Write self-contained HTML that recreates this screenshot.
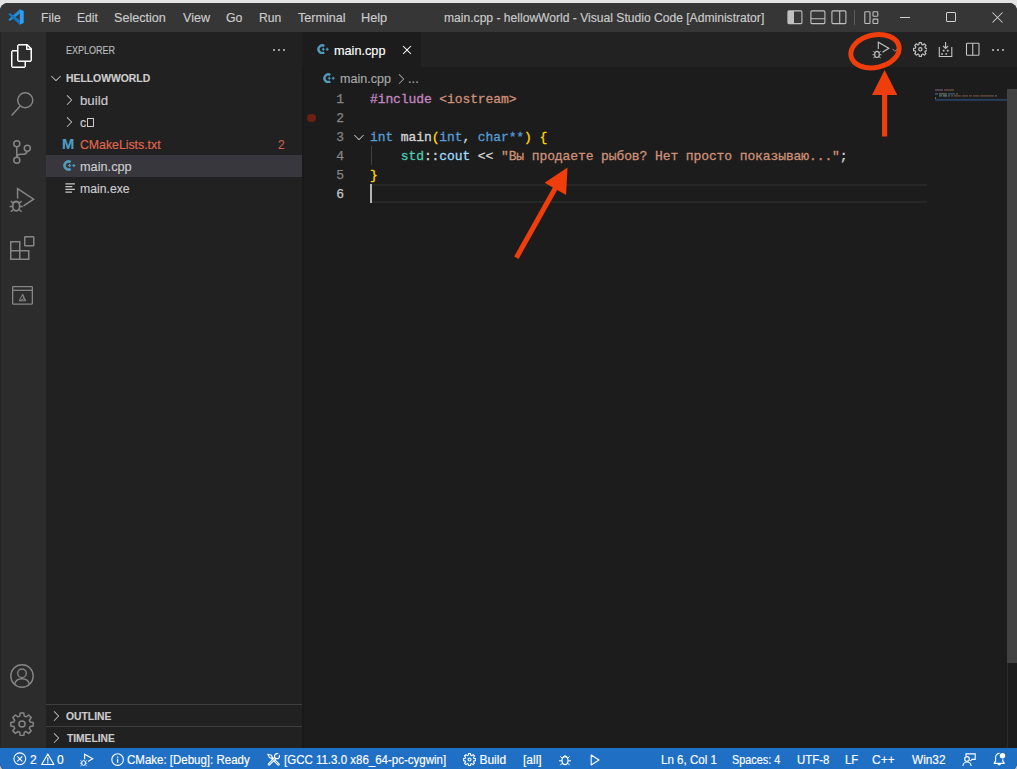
<!DOCTYPE html>
<html><head><meta charset="utf-8">
<style>
*{box-sizing:border-box;margin:0;padding:0}
html,body{width:1017px;height:769px;overflow:hidden;background:linear-gradient(#e4e4e4 0,#e4e4e4 700px,#c9c3bd 760px)}
body{font-family:"Liberation Sans",sans-serif;font-size:13px;color:#ccc;position:relative}
#win{position:absolute;left:0;top:3px;width:1017px;height:769px;background:#1c1c1c;border-radius:8px 8px 9px 9px;overflow:hidden}
#in{position:absolute;left:0;top:-3px;width:1017px;height:773px}
#in>div,#in>svg,#in>span{position:absolute}
#title{left:0;top:0;width:1017px;height:32px;background:#363636}
#act{left:0;top:32px;width:46px;height:716px;background:#2c2c2c;border-left:1px solid #242424}
#side{left:46px;top:32px;width:256px;height:716px;background:#212122}
#tabs{left:302px;top:32px;width:715px;height:35px;background:#222223}
#tab{left:302px;top:32px;width:119px;height:35px;background:#1c1c1c}
#status{left:0;top:748px;width:1017px;height:25px;background:#1f6fc5}
.t{-webkit-text-stroke:0.15px currentColor;white-space:nowrap;line-height:16px;height:16px;transform-origin:0 50%}
.menu{color:#cccccc;font-size:13px}
.st{color:#fff;font-size:12px}
.code{-webkit-text-stroke:0.3px currentColor;font-family:"Liberation Mono",monospace;font-size:13px;letter-spacing:-0.1px;white-space:pre;left:370px;height:19px;line-height:19px;color:#d4d4d4}
.ln{-webkit-text-stroke:0.25px currentColor;font-family:"Liberation Mono",monospace;font-size:13px;letter-spacing:-0.1px;left:326px;width:18px;text-align:right;height:19px;line-height:19px;color:#858585}
.k{color:#569cd6}.p{color:#c586c0}.s{color:#ce9178}.y{color:#ffd700}.v{color:#9cdcfe}.n{color:#4ec9b0}.f{color:#dcdcaa}
</style></head><body>
<div id="win"><div id="in">
 <div id="title"></div>
 <div id="act"></div>
 <div id="side"></div>
 <div id="tabs"></div>
 <div id="tab"></div>
 <div id="status"></div>


 <!-- STRUCTURE -->
 <div style="left:302px;top:67px;width:2px;height:681px;background:#191919"></div>
 <div style="left:46px;top:155px;width:256px;height:22px;background:#37373d"></div>
 <div style="left:46px;top:704px;width:256px;height:1px;background:#3f3f40"></div>
 <div style="left:46px;top:726px;width:256px;height:1px;background:#3f3f40"></div>
 <div style="left:370px;top:184px;width:557px;height:19px;border-top:2px solid #272727;border-bottom:2px solid #272727"></div>
 <div style="left:370px;top:184px;width:2px;height:19px;background:#b4b4b2"></div>
 <div style="left:371px;top:146px;width:1px;height:19px;background:#404040"></div>
 <div style="left:1007px;top:89px;width:1px;height:659px;background:#2b2b2b"></div>
 <div style="left:1007px;top:89px;width:10px;height:574px;background:#424242"></div>
 <div style="left:307.400px;top:113.800px;width:8.200px;height:8.200px;border-radius:50%;background:#6b2014"></div>


 <!-- ACTIVITY BAR ICONS -->
 <svg style="left:10px;top:44px" width="24" height="24" viewBox="0 0 24 24"><path fill="#ffffff" d="M17.5 0h-9L7 1.5V6H2.5L1 7.5v15.07L2.5 24h12.07L16 22.57V18h4.7l1.3-1.43V4.5L17.5 0zm0 2.12l2.38 2.38H17.5V2.12zm-3 20.38h-12v-15H7v9.07L8.5 18h6v4.5zm6-6h-12v-15H16V6h4.5v10.5z"/></svg>
 <svg style="left:10px;top:92px" width="24" height="24" viewBox="0 0 24 24" fill="none" stroke="#858585" stroke-width="1.5"><circle cx="15.25" cy="8.25" r="7.5"/><path d="M10.2 13.9L1.6 23.4"/></svg>
 <svg style="left:10px;top:140px" width="24" height="24" viewBox="0 0 24 24" fill="none" stroke="#858585" stroke-width="1.5"><circle cx="6.8" cy="3.75" r="3"/><circle cx="6.8" cy="20.2" r="3"/><circle cx="17.3" cy="8.2" r="3"/><path d="M6.8 6.8V17.2M17.3 11.2c-.6 2-2.2 3-4 3h-3c-1.8 0-3.3 1.2-3.5 3"/></svg>
 <svg style="left:9px;top:187px" width="26" height="26" viewBox="0 0 26 26" fill="none" stroke="#858585" stroke-width="1.5"><path d="M8.6 11.5V1.7L24.6 12.2 14.5 18.8"/><ellipse cx="7.2" cy="19.3" rx="3.500" ry="4.600" stroke-width="1.700"/><path d="M4.400 16.300L1.800 14.200M10 16.300L12.600 14.200M3.700 19.600H.6M10.700 19.600H13.800M4.400 22.500L1.800 24.800M10 22.500L12.600 24.800M4.600 15.600c.6-1.700 4.600-1.700 5.200 0" stroke-width="1.500"/></svg>
 <svg style="left:10px;top:236px" width="25" height="24" viewBox="0 0 25 24" fill="none" stroke="#858585" stroke-width="1.5"><path d="M.75 5.75h9v9h9v8.5h-18zM.75 14.75h9v8.5"/><rect x="14.75" y=".75" width="9" height="9" rx=".5"/></svg>
 <svg style="left:12px;top:286px" width="21" height="19" viewBox="0 0 21 19" fill="none" stroke="#858585" stroke-width="1.3"><rect x=".65" y=".65" width="19.7" height="17.4" rx=".5"/><path d="M.65 4.3h19.7"/><path d="M10.6 8.2l-3.4 6.6h6.6zM10.6 8.2l1.2 4.6-4.6 2M11.8 12.8l2 2" stroke-width="1" stroke-linejoin="round"/></svg>
 <svg style="left:10px;top:664px" width="24" height="24" viewBox="0 0 24 24" fill="none" stroke="#858585" stroke-width="1.4"><circle cx="12" cy="12" r="11.2"/><circle cx="12" cy="9.3" r="4.3"/><path d="M4.6 20.3c.8-3.8 3.6-5.6 7.4-5.6s6.600 1.800 7.400 5.600"/></svg>
 <svg style="left:10px;top:712px" width="24" height="24" viewBox="0 0 24 24" fill="none" stroke="#858585" stroke-width="1.5" stroke-linejoin="round"><g id="gear"><path d="M10.2 1h3.600l.5 3.100 1.800.75 2.550-1.850 2.550 2.550-1.850 2.550.75 1.800 3.100.5v3.600l-3.100.5-.75 1.800 1.850 2.550-2.550 2.550-2.550-1.850-1.800.75-.5 3.100h-3.600l-.5-3.100-1.800-.75-2.550 1.850-2.550-2.550 1.850-2.550-.75-1.800-3.100-.5v-3.600l3.100-.5.750-1.800-1.850-2.550 2.550-2.550 2.550 1.850 1.800-.75z"/><circle cx="12" cy="12" r="3"/></g></svg>


 <!-- LOGO -->
 <svg style="left:8px;top:9px" width="16" height="16" viewBox="0 0 16 16"><polygon points="11.8,0.3 11.8,4.7 1.9,12.1 0.3,10.8" fill="#1f8fe0"/><polygon points="11.8,15.700 11.800,11.300 1.900,3.900 0.300,5.200" fill="#1478c6"/><polygon points="11.800,0.300 15.700,2.100 15.700,13.900 11.800,15.700" fill="#2d9ff2"/></svg>

 <!-- SIDEBAR ICONS -->
 <svg style="left:271px;top:42px" width="16" height="16" viewBox="0 0 16 16"><path fill="#c5c5c5" d="M4 8a1 1 0 1 1-2 0 1 1 0 0 1 2 0zm5 0a1 1 0 1 1-2 0 1 1 0 0 1 2 0zm5 0a1 1 0 1 1-2 0 1 1 0 0 1 2 0z"/></svg>
 <svg style="left:48px;top:70px" width="16" height="16" viewBox="0 0 16 16"><path fill="#c5c5c5" d="M7.976 10.072l4.357-4.357.62.618L8.284 11h-.618L3 6.333l.619-.618 4.357 4.357z"/></svg>
 <svg style="left:61px;top:91.600px" width="16" height="16" viewBox="0 0 16 16"><path fill="#c5c5c5" d="M10.072 8.024L5.715 3.667l.618-.62L11 7.716v.618L6.333 13l-.618-.619 4.357-4.357z"/></svg>
 <svg style="left:61px;top:113.600px" width="16" height="16" viewBox="0 0 16 16"><path fill="#c5c5c5" d="M10.072 8.024L5.715 3.667l.618-.62L11 7.716v.618L6.333 13l-.618-.619 4.357-4.357z"/></svg>
 <svg style="left:48px;top:708px" width="16" height="16" viewBox="0 0 16 16"><path fill="#c5c5c5" d="M10.072 8.024L5.715 3.667l.618-.62L11 7.716v.618L6.333 13l-.618-.619 4.357-4.357z"/></svg>
 <svg style="left:48px;top:730px" width="16" height="16" viewBox="0 0 16 16"><path fill="#c5c5c5" d="M10.072 8.024L5.715 3.667l.618-.62L11 7.716v.618L6.333 13l-.618-.619 4.357-4.357z"/></svg>
 <div style="left:87.300px;top:118.200px;width:6.800px;height:8.900px;border:1px solid #cccccc"></div>
 <div class="t" style="left:61.700px;top:136.200px;font-size:15px;font-weight:bold;color:#4f9cc4;transform:scaleX(0.98)">M</div>
 <svg style="left:62.5px;top:160.3px" width="13.0" height="11.0" viewBox="0 0 13 11" fill="none" stroke="#519aba"><path d="M7.700 2.100A4 4 0 1 0 7.700 8.900" stroke-width="2.600"/><path d="M5 5.500h3.200M6.600 3.900v3.200M9.200 5.500h3.200M10.800 3.900v3.200" stroke-width="1.200"/></svg>
 <svg style="left:65px;top:183px" width="11" height="10" viewBox="0 0 11 10" stroke="#c5c5c5" stroke-width="1.300"><path d="M.4 .9h9.500M.4 3.600h6.900M.4 6.400h9.500M.4 9.100h6.600"/></svg>

 <!-- TAB / BREADCRUMB ICONS -->
 <svg style="left:316.8px;top:43.8px" width="12.35" height="10.45" viewBox="0 0 13 11" fill="none" stroke="#519aba"><path d="M7.700 2.100A4 4 0 1 0 7.700 8.900" stroke-width="2.600"/><path d="M5 5.500h3.200M6.600 3.900v3.200M9.200 5.500h3.200M10.800 3.900v3.200" stroke-width="1.200"/></svg>
 <svg style="left:399.300px;top:42.200px" width="16" height="16" viewBox="0 0 16 16"><path fill="#ffffff" d="M8 8.707l3.646 3.647.708-.707L8.707 8l3.647-3.646-.707-.708L8 7.293 4.354 3.646l-.707.708L7.293 8l-3.646 3.646.707.708L8 8.707z"/></svg>
 <svg style="left:322.6px;top:72.8px" width="12.35" height="10.45" viewBox="0 0 13 11" fill="none" stroke="#519aba"><path d="M7.700 2.100A4 4 0 1 0 7.700 8.900" stroke-width="2.600"/><path d="M5 5.500h3.200M6.600 3.900v3.200M9.200 5.500h3.200M10.800 3.900v3.200" stroke-width="1.200"/></svg>
 <svg style="left:392.800px;top:71.200px" width="16" height="16" viewBox="0 0 16 16"><path fill="#a9a9a9" d="M10.072 8.024L5.715 3.667l.618-.62L11 7.716v.618L6.333 13l-.618-.619 4.357-4.357z"/></svg>
 <svg style="left:350.500px;top:128.500px" width="16" height="16" viewBox="0 0 16 16"><path fill="#c5c5c5" d="M7.976 10.072l4.357-4.357.62.618L8.284 11h-.618L3 6.333l.619-.618 4.357 4.357z"/></svg>


 <!-- TITLE BAR ICONS -->
 <svg style="left:787px;top:10px" width="16" height="15" viewBox="0 0 16 15" fill="none" stroke="#c0c0c0" stroke-width="1.100"><rect x=".9" y=".9" width="14" height="12.700" rx="1"/><rect x="1" y="1" width="6" height="12.500" fill="#c0c0c0" stroke="none"/></svg>
 <svg style="left:809.500px;top:10px" width="16" height="15" viewBox="0 0 16 15" fill="none" stroke="#c0c0c0" stroke-width="1.100"><rect x=".9" y=".9" width="14" height="12.700" rx="1"/><path d="M.9 8.700h14"/></svg>
 <svg style="left:831.300px;top:10px" width="16" height="15" viewBox="0 0 16 15" fill="none" stroke="#c0c0c0" stroke-width="1.100"><rect x=".9" y=".9" width="14" height="12.700" rx="1"/><path d="M8.700 .9v12.700"/></svg>
 <div style="left:854px;top:9.500px;width:1px;height:15px;background:#5a5a5a"></div>
 <svg style="left:863.500px;top:10.500px" width="15" height="14" viewBox="0 0 15 14" fill="none" stroke="#c0c0c0" stroke-width="1.100"><rect x=".8" y=".8" width="5.200" height="11.700" rx=".8"/><rect x="9" y=".8" width="4.800" height="4.400" rx=".8"/><rect x="9" y="8.100" width="4.800" height="4.400" rx=".8"/></svg>
 <div style="left:900px;top:17px;width:10px;height:1px;background:#d0d0d0"></div>
 <div style="left:946px;top:12px;width:10.300px;height:10px;border:1px solid #d0d0d0;border-radius:1px"></div>
 <svg style="left:991.700px;top:11.800px" width="11" height="11" viewBox="0 0 11 11" stroke="#d0d0d0" stroke-width="1.050"><path d="M.5 .5l10 10M10.500 .5L.5 10.500"/></svg>

 <!-- EDITOR ACTIONS -->
 <svg style="left:871px;top:40px" width="20" height="20" viewBox="0 0 20 20" fill="none" stroke="#c5c5c5" stroke-width="1.100"><path d="M7.300 9V2.300L17.800 8.300 11.500 12.200"/><ellipse cx="6" cy="14.500" rx="2.300" ry="3" stroke-width="1.100"/><path d="M4 12.600L2.300 11.300M8 12.600L9.700 11.300M3.700 14.700H1.500M8.300 14.700h2.200M4 16.600L2.300 18M8 16.600L9.700 18M4.300 12c.5-1.100 2.900-1.100 3.400 0" stroke-width=".9"/></svg>
 <svg style="left:890.500px;top:45.500px" width="8" height="8" viewBox="0 0 16 16"><path fill="#c5c5c5" d="M7.976 10.072l4.357-4.357.62.618L8.284 11h-.618L3 6.333l.619-.618 4.357 4.357z"/></svg>
 <svg style="left:912.700px;top:42.200px" width="14.700" height="14.700" viewBox="0 0 24 24" fill="none" stroke="#c5c5c5" stroke-width="1.900" stroke-linejoin="round"><path d="M10.2 1h3.600l.5 3.100 1.800.75 2.550-1.850 2.550 2.550-1.850 2.550.75 1.800 3.100.5v3.600l-3.100.5-.75 1.800 1.850 2.550-2.550 2.550-2.550-1.850-1.800.75-.5 3.100h-3.600l-.5-3.100-1.800-.75-2.550 1.850-2.550-2.550 1.850-2.550-.75-1.800-3.100-.5v-3.600l3.100-.5.750-1.800-1.850-2.550 2.550-2.550 2.550 1.850 1.800-.75z"/><circle cx="12" cy="12" r="2.700"/></svg>
 <svg style="left:938px;top:41px" width="15" height="17" viewBox="0 0 15 17" fill="none" stroke="#c5c5c5" stroke-width="1.100"><path d="M1.300 5.900v9.600h12.500V5.900M7.600 .9v6.300M5 4.800l2.600 2.600 2.600-2.600"/><path d="M4.800 9.600h1.700M8.900 9.600h1.700M3.200 13h1.700M7.400 13h1.700" stroke-width="1.700"/></svg>
 <svg style="left:964.500px;top:42px" width="16" height="15" viewBox="0 0 16 15" fill="none" stroke="#c5c5c5" stroke-width="1.100"><rect x="1.500" y="1.200" width="12.500" height="12" rx=".8"/><path d="M7.750 1.200v12"/></svg>
 <svg style="left:990px;top:42px" width="16" height="16" viewBox="0 0 16 16"><path fill="#c5c5c5" d="M4 8a1 1 0 1 1-2 0 1 1 0 0 1 2 0zm5 0a1 1 0 1 1-2 0 1 1 0 0 1 2 0zm5 0a1 1 0 1 1-2 0 1 1 0 0 1 2 0z"/></svg>

 <!-- MINIMAP -->
 <svg style="left:935px;top:88px" width="72" height="14" viewBox="0 0 72 14"><rect x="0" y="1.400" width="8" height="1.200" fill="#c586c0" opacity=".55"/><rect x="9" y="1.400" width="10" height="1.200" fill="#ce9178" opacity=".5"/><rect x="0" y="5.300" width="3" height="1.200" fill="#569cd6" opacity=".6"/><rect x="4" y="5.300" width="8" height="1.200" fill="#c8c8a0" opacity=".5"/><rect x="13" y="5.300" width="7" height="1.200" fill="#569cd6" opacity=".55"/><rect x="21" y="5.300" width="2" height="1.200" fill="#ffd700" opacity=".4"/><rect x="4" y="7.300" width="3" height="1.200" fill="#4ec9b0" opacity=".6"/><rect x="8" y="7.300" width="4" height="1.200" fill="#9cdcfe" opacity=".55"/><rect x="13" y="7.300" width="2" height="1.200" fill="#d4d4d4" opacity=".4"/><rect x="16" y="7.300" width="2" height="1.200" fill="#ce9178" opacity=".45"/><rect x="19" y="7.300" width="7" height="1.200" fill="#ce9178" opacity=".45"/><rect x="27" y="7.300" width="6" height="1.200" fill="#ce9178" opacity=".45"/><rect x="34" y="7.300" width="3" height="1.200" fill="#ce9178" opacity=".45"/><rect x="38" y="7.300" width="6" height="1.200" fill="#ce9178" opacity=".45"/><rect x="45" y="7.300" width="14" height="1.200" fill="#ce9178" opacity=".45"/><rect x="60" y="7.300" width="2" height="1.200" fill="#d4d4d4" opacity=".4"/><rect x="0" y="9.300" width="1" height="1.400" fill="#ffd700" opacity=".55"/><rect x="0" y="10.900" width="72" height="2" fill="#263e5c"/></svg>


 <!-- STATUS ICONS -->
 <svg style="left:13px;top:752px" width="14" height="14" viewBox="0 0 14 14" fill="none" stroke="#fff" stroke-width="1.100"><circle cx="6.800" cy="6.800" r="5.900"/><path d="M4.300 4.300l5 5M9.300 4.300l-5 5"/></svg>
 <svg style="left:40.500px;top:752.500px" width="14" height="13" viewBox="0 0 14 13" fill="none" stroke="#fff" stroke-width="1.100" stroke-linejoin="round"><path d="M6.800 .9L12.900 11.500H.7z"/><path d="M6.800 4.300v4.200M6.800 9.300v1.200" stroke-width="1.200"/></svg>
 <svg style="left:79px;top:753px" width="16" height="14" viewBox="0 0 16 14" fill="none" stroke="#fff" stroke-width="1.100"><path d="M5.600 6.200V1.300L13.700 5.800 9 8.500"/><ellipse cx="4.600" cy="10" rx="1.900" ry="2.400" stroke-width="1"/><path d="M2.900 8.600L1.500 7.500M6.300 8.600L7.700 7.500M2.700 10.200H1M6.500 10.200h1.700M2.900 11.700L1.500 12.900M6.300 11.700l1.400 1.200" stroke-width=".8"/></svg>
 <svg style="left:110.500px;top:752.500px" width="14" height="14" viewBox="0 0 14 14" fill="none" stroke="#fff" stroke-width="1.100"><circle cx="6.600" cy="6.600" r="5.800"/><path d="M6.600 5.800v4M6.600 3.400v1.300" stroke-width="1.300"/></svg>
 <svg style="left:266.500px;top:752.500px" width="14" height="14" viewBox="0 0 14 14" fill="none" stroke="#fff" stroke-linecap="round" stroke-linejoin="round"><path d="M5.600 5.600L11.400 11.400" stroke-width="2.700"/><path d="M5.600 5.600L11.400 11.400" stroke="#1f6fc5" stroke-width=".7"/><path d="M8 5.300L2.100 11.300" stroke-width="2.700"/><path d="M8.300 5L2.100 11.300" stroke="#1f6fc5" stroke-width=".7"/><path d="M.8 1.300L4.500 2.200 5.700 5.500 2.400 4.600z" stroke-width="1.100" fill="#1f6fc5"/><circle cx="10" cy="3.200" r="2.500" stroke-width="1.200" fill="#1f6fc5"/><path d="M10.200 3L13 .2" stroke="#1f6fc5" stroke-width="1.700" stroke-linecap="butt"/></svg>
 <svg style="left:463px;top:752.500px" width="13" height="13" viewBox="0 0 24 24" fill="none" stroke="#fff" stroke-width="2.100" stroke-linejoin="round"><path d="M10.2 1h3.600l.5 3.100 1.800.75 2.550-1.850 2.550 2.550-1.850 2.550.75 1.800 3.100.5v3.600l-3.100.5-.75 1.800 1.850 2.550-2.550 2.550-2.550-1.850-1.800.75-.5 3.100h-3.600l-.5-3.100-1.800-.75-2.550 1.850-2.550-2.550 1.850-2.550-.75-1.800-3.100-.5v-3.600l3.100-.5.750-1.800-1.850-2.550 2.550-2.550 2.550 1.850 1.800-.75z"/><circle cx="12" cy="12" r="2.800"/></svg>
 <svg style="left:558px;top:752.500px" width="14" height="14" viewBox="0 0 14 14" fill="none" stroke="#fff" stroke-width="1.100"><ellipse cx="7" cy="7.600" rx="3" ry="4"/><path d="M4.900 4.800c.3-2.700 3.900-2.700 4.200 0M4.300 5.300L2.300 3.300M9.700 5.300l2-2M4 7.800H1M10 7.800h3M4.300 10.200l-2 2M9.700 10.200l2 2" stroke-width="1"/></svg>
 <svg style="left:590px;top:753.500px" width="11" height="12" viewBox="0 0 11 12" fill="none" stroke="#fff" stroke-width="1.100" stroke-linejoin="round"><path d="M1.200 1l7.800 5-7.800 5z"/></svg>
 <svg style="left:962px;top:752.500px" width="15" height="14" viewBox="0 0 15 14" fill="none" stroke="#fff" stroke-width="1.100"><path d="M4 3.200V.9h9.200v5.500h-3.200l-1.700 1.700"/><circle cx="5" cy="5.900" r="2.300"/><path d="M.8 12.900c.4-2.600 2.100-3.900 4.200-3.900s3.800 1.300 4.200 3.900"/></svg>
 <svg style="left:993px;top:752px" width="14" height="14" viewBox="0 0 14 14" fill="none" stroke="#fff" stroke-width="1.100"><path d="M6.600 1.400C4 1.400 2.600 3.200 2.600 5.600v3.600L1.300 10.800v.6h9.800v-.6L9.800 9.200V7.200"/><path d="M4.900 11.600c.2 1.700 2.400 1.700 2.600 0" /><circle cx="9.500" cy="3.700" r="2.700" fill="#fff" stroke="none"/></svg>

 <!-- RED ANNOTATIONS -->
 <svg style="left:840px;top:25px" width="70" height="120" viewBox="840 25 70 120"><ellipse cx="875" cy="51.200" rx="24.500" ry="16.300" fill="none" stroke="#f03d0c" stroke-width="5" transform="rotate(-12 875 51.200)"/><path d="M884.600 70L897.300 95H887.200V136.500H882V95H872z" fill="#f03d0c"/></svg>
 <svg style="left:500px;top:160px" width="80" height="105" viewBox="500 160 80 105"><path d="M567.500 167.500L566.100 194.900 557.200 189.900 518.600 258.900 514.200 256.400 552.800 187.400 544.600 182.800z" fill="#f03d0c"/></svg>

 <!-- TITLE BAR TEXT -->
 <div class="t menu" id="m1" style="left:41px;top:9.8px;transform:scaleX(0.94)">File</div>
 <div class="t menu" id="m2" style="left:77px;top:9.8px;transform:scaleX(0.93)">Edit</div>
 <div class="t menu" id="m3" style="left:114.3px;top:9.8px;transform:scaleX(0.97)">Selection</div>
 <div class="t menu" id="m4" style="left:182.6px;top:9.8px;transform:scaleX(0.97)">View</div>
 <div class="t menu" id="m5" style="left:226px;top:9.8px;transform:scaleX(0.95)">Go</div>
 <div class="t menu" id="m6" style="left:258.6px;top:9.8px;transform:scaleX(0.93)">Run</div>
 <div class="t menu" id="m7" style="left:297.5px;top:9.8px;transform:scaleX(0.97)">Terminal</div>
 <div class="t menu" id="m8" style="left:361.4px;top:9.8px;transform:scaleX(0.98)">Help</div>
 <div class="t" id="ttl" style="left:444.3px;top:9.8px;font-size:12px;color:#cccccc;transform:scaleX(1.008)">main.cpp - hellowWorld - Visual Studio Code [Administrator]</div>

 <!-- SIDEBAR TEXT -->
 <div class="t" id="s0" style="left:66.2px;top:41.8px;font-size:11px;color:#bbbbbb;transform:scaleX(0.82)">EXPLORER</div>
 <div class="t" id="s1" style="left:66.2px;top:70px;font-size:11px;font-weight:bold;color:#cccccc;transform:scaleX(0.943)">HELLOWWORLD</div>
 <div class="t" id="s2" style="left:80.2px;top:92.8px;color:#cccccc;transform:scaleX(1.02)">build</div>
 <div class="t" id="s3" style="left:80.2px;top:114.8px;color:#cccccc;transform:scaleX(0.95)">c</div>
 <div class="t" id="s4" style="left:80.2px;top:136.8px;color:#e0674e;transform:scaleX(0.945)">CMakeLists.txt</div>
 <div class="t" id="s4b" style="left:278px;top:136.8px;color:#c7604b;font-size:12px">2</div>
 <div class="t" id="s5" style="left:80.2px;top:158.8px;color:#cccccc;transform:scaleX(0.98)">main.cpp</div>
 <div class="t" id="s6" style="left:80.2px;top:180.8px;color:#cccccc;transform:scaleX(0.94)">main.exe</div>
 <div class="t" id="s7" style="left:66px;top:708px;font-size:11px;font-weight:bold;color:#cccccc;transform:scaleX(0.94)">OUTLINE</div>
 <div class="t" id="s8" style="left:66.8px;top:730px;font-size:11px;font-weight:bold;color:#cccccc;transform:scaleX(0.93)">TIMELINE</div>

 <!-- TAB + BREADCRUMB -->
 <div class="t" id="tb" style="left:334.4px;top:42.6px;color:#ffffff;transform:scaleX(0.975)">main.cpp</div>
 <div class="t" id="bc" style="left:340.4px;top:70.6px;color:#a9a9a9;transform:scaleX(0.965)">main.cpp</div>
 <div class="t" id="bc2" style="left:408px;top:70.6px;color:#a9a9a9">...</div>

 <!-- CODE -->
 <div class="ln" style="top:90px">1</div>
 <div class="ln" style="top:109px">2</div>
 <div class="ln" style="top:128px">3</div>
 <div class="ln" style="top:147px">4</div>
 <div class="ln" style="top:166px">5</div>
 <div class="ln" style="top:185px;color:#c6c6c6">6</div>
 <div class="code" id="c1" style="top:90px"><span class="p">#include</span> <span class="s">&lt;iostream&gt;</span></div>
 <div class="code" id="c3" style="top:128px"><span class="k">int</span> main<span class="y">(</span><span class="k">int</span>, <span class="k">char</span><span class="k">**</span><span class="y">)</span> <span class="y">{</span></div>
 <div class="code" id="c4" style="top:147px">    <span class="n">std</span>::<span class="v">cout</span> &lt;&lt; <span class="s">"Вы продаете рыбов? Нет просто показываю..."</span>;</div>
 <div class="code" id="c5" style="top:166px"><span class="y">}</span></div>

 <!-- STATUS TEXT -->
 <div class="t st" id="st1" style="left:30px;top:751.7px">2</div>
 <div class="t st" id="st2" style="left:57px;top:751.7px">0</div>
 <div class="t st" id="st3" style="left:126.6px;top:751.7px;transform:scaleX(0.958)">CMake: [Debug]: Ready</div>
 <div class="t st" id="st4" style="left:284px;top:751.7px;transform:scaleX(0.958)">[GCC 11.3.0 x86_64-pc-cygwin]</div>
 <div class="t st" id="st5" style="left:479.4px;top:751.7px;transform:scaleX(1.0)">Build</div>
 <div class="t st" id="st6" style="left:523px;top:751.7px;transform:scaleX(1.0)">[all]</div>
 <div class="t st" id="st7" style="left:660.8px;top:751.7px;transform:scaleX(0.965)">Ln 6, Col 1</div>
 <div class="t st" id="st8" style="left:732px;top:751.7px;transform:scaleX(0.905)">Spaces: 4</div>
 <div class="t st" id="st9" style="left:796.8px;top:751.7px;transform:scaleX(0.95)">UTF-8</div>
 <div class="t st" id="st10" style="left:844.6px;top:751.7px;transform:scaleX(0.95)">LF</div>
 <div class="t st" id="st11" style="left:872px;top:751.7px;transform:scaleX(1.0)">C++</div>
 <div class="t st" id="st12" style="left:912.4px;top:751.7px;transform:scaleX(0.985)">Win32</div>
</div></div>
</body></html>
